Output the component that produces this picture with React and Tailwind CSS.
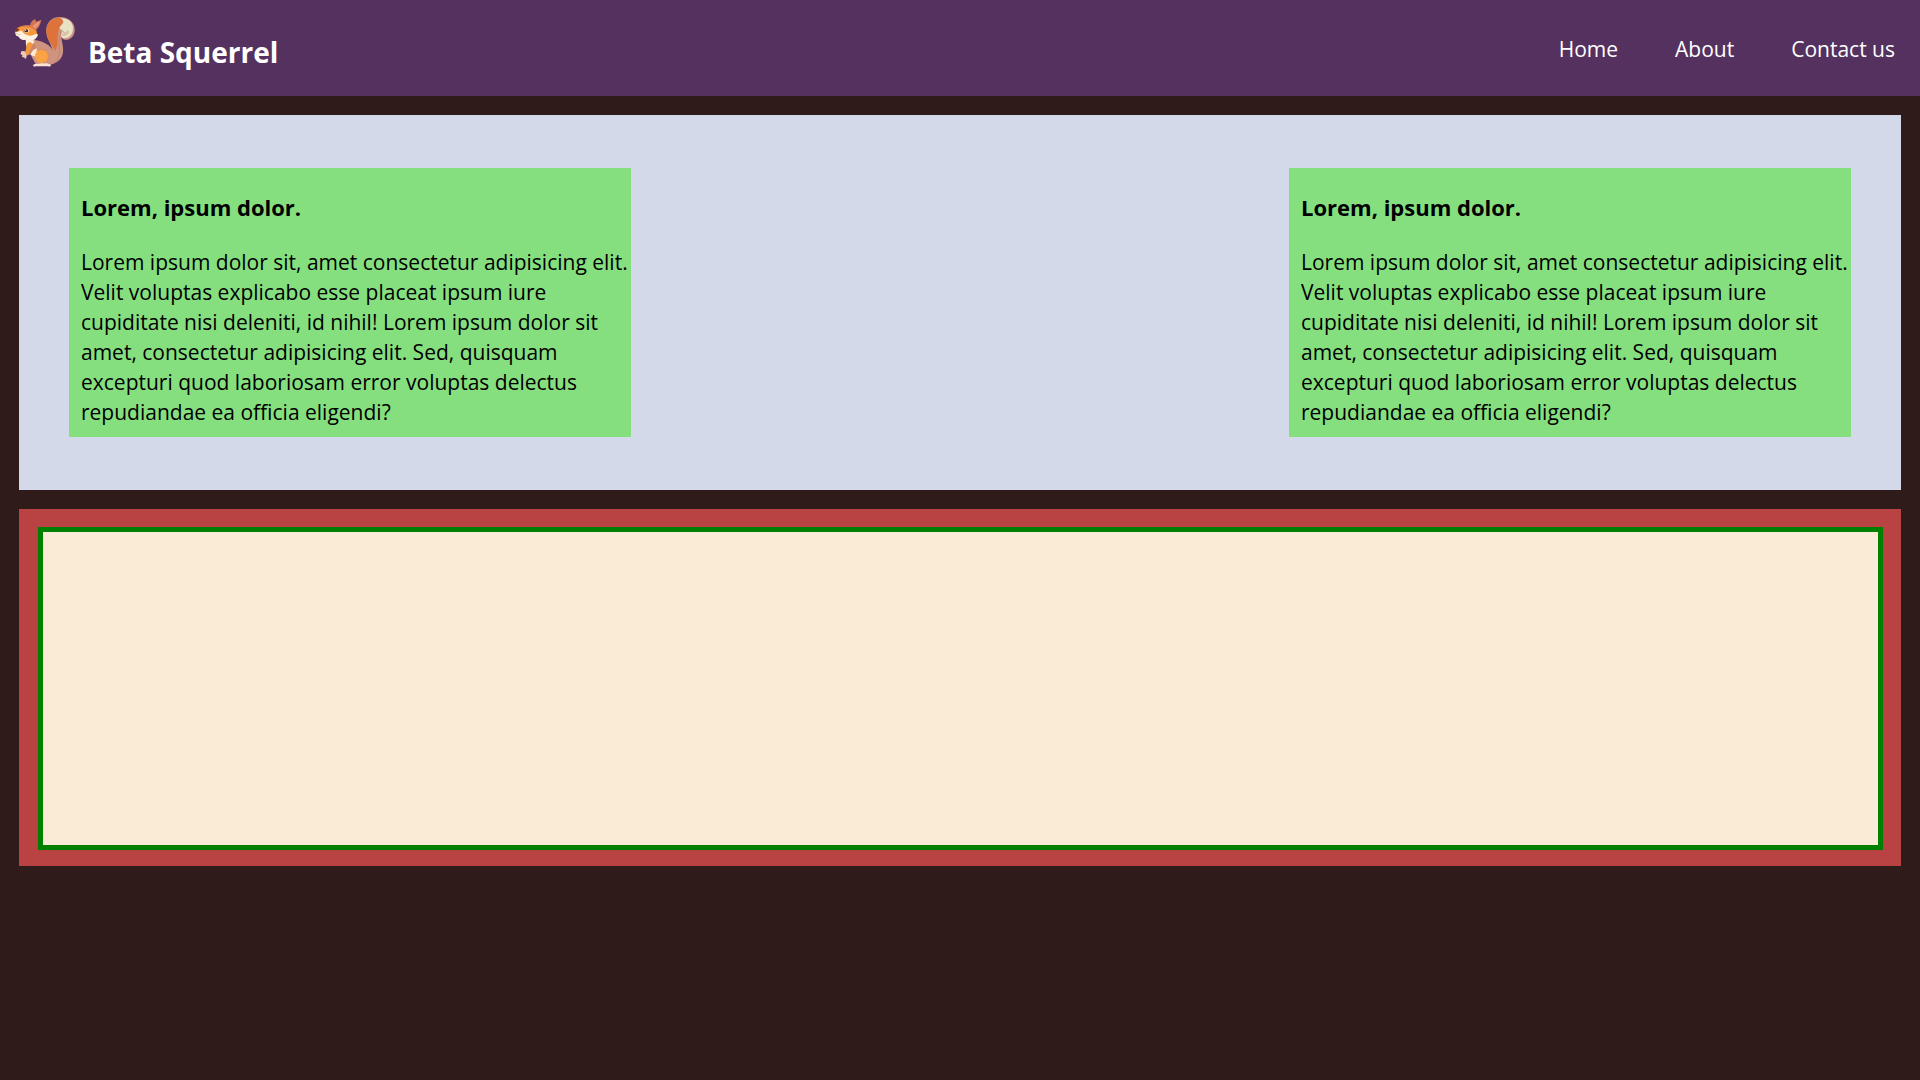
const CARD_TEXT =
  "Lorem ipsum dolor sit, amet consectetur adipisicing elit. Velit voluptas explicabo esse placeat ipsum iure cupiditate nisi deleniti, id nihil! Lorem ipsum dolor sit amet, consectetur adipisicing elit. Sed, quisquam excepturi quod laboriosam error voluptas delectus repudiandae ea officia eligendi?";

const LINKS = ["Home", "About", "Contact us"];

function Squirrel() {
  return (
    <svg viewBox="42 48 186 156" className="mb-3 h-[52px] w-[62px] shrink-0" aria-hidden="true">
      {/* tail */}
      <path d="M148 190C166 172 160 150 147 124C132 94 137 64 164 53C190 45 222 58 224 86C226 108 210 121 194 119C187 118 184 114 184 109C184 126 191 134 189 156C187 176 174 188 152 194Z" fill="#cf9480" />
      <path d="M165 153C160 137 141 121 139 98C138 72 152 56 174 53C184 54 190 61 188 69C181 78 176 86 174 99C171 121 177 135 165 153Z" fill="#dd723a" />
      <path d="M182 55C203 53 219 66 219 85C219 104 207 115 194 115C187 114 184 111 182 105C183 99 185 95 189 92C181 90 178 86 179 81L190 69C191 62 188 58 182 55Z" fill="#e7e2c5" />
      <path d="M182 88C180 98 185 106 193 105C202 104 206 97 203 93M190 95C190 100 195 101 198 97" fill="none" stroke="#cf9480" strokeWidth="3" strokeLinecap="round" />
      <path d="M159 190C174 181 179 168 178 150C176 132 177 112 183 96" fill="none" stroke="#c98470" strokeWidth="3" />
      {/* body */}
      <path d="M99 119C124 121 154 134 162 158C168 179 154 194 135 194H108L86 154Z" fill="#cf9480" />
      <path d="M77 119L101 121L111 149C116 162 108 172 99 168C88 163 82 145 78 134Z" fill="#fdebd4" />
      {/* foot and paws */}
      <path d="M100 194C105 190 112 192 119 191C132 189 144 190 153 194C153 199 149 200 142 199H107C101 201 98 198 100 194Z" fill="#fbe4d2" />
      <path d="M64 156C62 151 70 153 76 154L81 161L79 173C77 178 72 176 73 171C66 173 64 169 68 166C62 165 60 159 64 156Z" fill="#f3c9b6" />
      <path d="M81 132C77 142 80 151 74 156L80 166C88 167 93 160 93 152L101 139C99 128 87 122 81 132Z" fill="#f49a3e" />
      <path d="M103 127C92 135 95 152 82 166C91 165 95 158 99 151L111 144Z" fill="#cf8567" />
      <ellipse cx="125" cy="169" rx="20" ry="20" fill="#fba344" />
      <path d="M107 154C120 144 142 149 145 168C146 179 139 188 130 190" fill="none" stroke="#d98a53" strokeWidth="2" />
      {/* ears and head */}
      <path d="M90 78C91 66 98 61 105 57L109 65L124 59C121 76 114 86 104 92Z" fill="#cf765b" />
      <path d="M98 78C105 75 109 67 120 63C116 75 111 81 103 86Z" fill="#f19a72" />
      <path d="M48 87C59 77 77 74 91 79C104 84 111 93 112 104C106 116 91 118 78 114C66 112 56 103 48 100Z" fill="#f8963a" />
      <path d="M60 82C72 74 88 74 98 79C105 83 110 89 111 98C104 89 96 83 86 81C77 79 69 82 60 82Z" fill="#dc7f50" />
      <path d="M46 94C53 97 59 95 64 91C68 99 76 105 88 107C97 109 102 100 113 102C115 108 108 114 106 117C99 123 84 126 76 119C67 122 59 116 56 110C47 109 45 102 46 94Z" fill="#fff2e2" />
      <ellipse cx="80" cy="92" rx="8" ry="6" fill="#fff0d9" />
      <ellipse cx="79" cy="92" rx="6" ry="5" fill="#5b2419" />
      <circle cx="77" cy="90" r="2" fill="#fff" />
      <path d="M44 88C45 83 53 84 57 87C57 92 52 96 47 95C44 93 43 91 44 88Z" fill="#79371f" />
      <path d="M48 99C54 104 59 105 64 102" fill="none" stroke="#e3b597" strokeWidth="2" />
    </svg>
  );
}

function Card() {
  return (
    <article className="w-[562px] bg-[#86df7f] pt-6 pb-2.5 pl-3">
      <h2 className="text-[22px] leading-[30px] font-bold">Lorem, ipsum dolor.</h2>
      <p className="mt-[25px] text-[21px] leading-[30px]">{CARD_TEXT}</p>
    </article>
  );
}

export default function App() {
  return (
    <div className="min-h-screen bg-[#2f1b1a] font-['Open_Sans','Noto_Sans',sans-serif] text-black">
      <header className="flex h-24 items-center justify-between bg-[#553160] pr-[25px] pl-3.5 text-white">
        <div className="flex items-center gap-3">
          <Squirrel />
          <h1 className="mt-2 text-[28px] leading-10 font-bold">Beta Squerrel</h1>
        </div>
        <nav className="flex gap-[57px] pt-0.5 text-[21px] leading-[30px]">
          {LINKS.map((label) => (
            <a key={label} href="#">{label}</a>
          ))}
        </nav>
      </header>
      <main className="flex flex-col gap-[19px] p-[19px]">
        <section className="flex justify-between bg-[#d3d9e8] px-[50px] py-[53px]">
          <Card />
          <Card />
        </section>
        <section className="bg-[#b94242] pt-[18px] pr-[18px] pb-4 pl-[19px]">
          <div className="h-[323px] border-5 border-[#008000] bg-[#faebd7]" />
        </section>
      </main>
    </div>
  );
}
